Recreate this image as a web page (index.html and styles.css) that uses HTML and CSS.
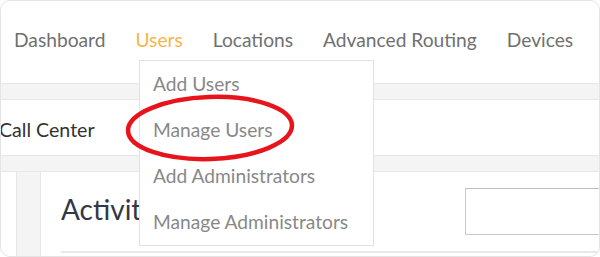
FILE: index.html
```html
<!DOCTYPE html>
<html lang="en">
<head>
    <meta charset="UTF-8">
    <title>Users menu</title>
    <link rel="stylesheet" href="styles.css">
</head>
<body>
    <div class="frame">
        <nav class="main-nav">
            <a href="#">Dashboard</a>
            <a href="#" class="active">Users</a>
            <a href="#">Locations</a>
            <a href="#">Advanced Routing</a>
            <a href="#">Devices</a>
        </nav>
        <div class="band"></div>
        <div class="sub-nav">
            <a href="#">Call Center</a>
        </div>
        <div class="band"></div>
        <div class="content">
            <div class="sidebar"></div>
            <div class="gutter"></div>
            <div class="card">
                <div class="card-head">
                    <h2>Activity</h2>
                    <input type="text" class="search">
                </div>
            </div>
        </div>

        <ul class="dropdown">
            <li><a href="#">Add Users</a></li>
            <li><a href="#">Manage Users</a></li>
            <li><a href="#">Add Administrators</a></li>
            <li><a href="#">Manage Administrators</a></li>
        </ul>

        <svg class="highlight" width="180" height="72" viewBox="0 0 180 72">
            <ellipse cx="90" cy="36" rx="82" ry="31" fill="none" stroke="#e8141b" stroke-width="4.5" transform="rotate(-2 90 36)"/>
        </svg>
    </div>
</body>
</html>
```

FILE: styles.css
```css
body {
    margin: 0;
    padding: 0;
    background-color: #ffffff;
    font-family: Lato, "Open Sans", sans-serif;
}
.frame {
    position: relative;
    width: 598px;
    height: 255px;
    border: 1px solid #e4e4e4;
    border-radius: 10px;
    overflow: hidden;
    background-color: #ffffff;
}
.main-nav {
    display: flex;
    gap: 30px;
    height: 53px;
    padding: 29px 0 0 13px;
    box-sizing: content-box;
}
.main-nav a {
    font-size: 19.2px;
    line-height: 20px;
    color: #707070;
    text-decoration: none;
}
.main-nav a.active {
    color: #f8b549;
}
.band {
    height: 15px;
    background-color: #f4f4f4;
    border-top: 1px solid #e7e7e7;
    border-bottom: 1px solid #e7e7e7;
}
.sub-nav {
    height: 35px;
    padding-top: 20px;
}
.sub-nav a {
    margin-left: -2px;
    font-size: 19.6px;
    line-height: 20px;
    color: #333333;
    text-decoration: none;
}
.content {
    display: flex;
    height: 90px;
}
.sidebar {
    width: 15px;
    border-right: 1px solid #e7e7e7;
}
.gutter {
    width: 23px;
    background-color: #f4f4f4;
}
.card {
    flex: 1;
    border-left: 1px solid #e7e7e7;
    padding: 16px 0 0 20px;
}
.card-head {
    display: flex;
    justify-content: space-between;
    align-items: flex-start;
    height: 63px;
    border-bottom: 2px solid #e9e9e9;
}
.card-head h2 {
    margin: 4px 0 0 0;
    font-size: 28px;
    font-weight: normal;
    line-height: 34px;
    color: #333845;
}
.search {
    width: 170px;
    height: 47px;
    margin-right: -36px;
    box-sizing: border-box;
    border: 1px solid #c9c9c9;
    border-top-color: #bdbdbd;
}
.dropdown {
    position: absolute;
    left: 138px;
    top: 59px;
    width: 233px;
    margin: 0;
    padding: 0;
    list-style: none;
    background-color: #ffffff;
    border: 1px solid #e2e2e2;
}
.dropdown li {
    height: 46px;
}
.dropdown a {
    display: block;
    padding-left: 13px;
    font-size: 19.2px;
    line-height: 46px;
    color: #888888;
    text-decoration: none;
}
.highlight {
    position: absolute;
    left: 119px;
    top: 91px;
}
```
